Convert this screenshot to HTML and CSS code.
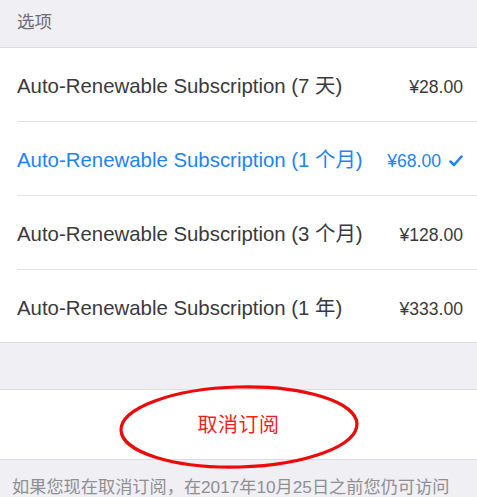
FILE: index.html
```html
<!DOCTYPE html>
<html lang="zh-CN">
<head>
    <meta charset="UTF-8">
    <meta name="viewport" content="width=device-width, initial-scale=1.0">
    <title>订阅</title>
    <link rel="stylesheet" href="styles.css">
</head>
<body>
    <div class="section-header">选项</div>

    <div class="option-list">
        <div class="option-row">
            <span class="option-name">Auto-Renewable Subscription (7 天)</span>
            <span class="option-price">¥28.00</span>
        </div>
        <div class="option-row selected">
            <span class="option-name">Auto-Renewable Subscription (1 个月)</span>
            <span class="option-price">¥68.00</span>
            <svg class="check" width="14" height="12" viewBox="0 0 14 12">
                <path d="M1.5 6.5 L5 10 L12.5 1.5" fill="none" stroke="currentColor" stroke-width="2.5" stroke-linecap="round" stroke-linejoin="round"/>
            </svg>
        </div>
        <div class="option-row">
            <span class="option-name">Auto-Renewable Subscription (3 个月)</span>
            <span class="option-price">¥128.00</span>
        </div>
        <div class="option-row">
            <span class="option-name">Auto-Renewable Subscription (1 年)</span>
            <span class="option-price">¥333.00</span>
        </div>
    </div>

    <div class="spacer"></div>

    <div class="cancel-block">
        <a class="cancel-button">取消订阅</a>
        <svg class="circle-mark" width="244" height="88" viewBox="0 0 244 88">
            <ellipse cx="121" cy="44" rx="118" ry="40" fill="none" stroke="#ee0a0a" stroke-width="3.2" transform="rotate(-1.5 121 44)"/>
        </svg>
    </div>

    <p class="footer-note">如果您现在取消订阅，在2017年10月25日之前您仍可访问</p>
</body>
</html>
```

FILE: styles.css
```css
body {
    margin: 0;
    padding: 0;
    background: #efeff4;
    font-family: "Liberation Sans", "Noto Sans CJK SC", Arial, sans-serif;
    color: #3a3a3c;
    overflow: hidden;
}
.section-header {
    height: 47px;
    padding: 12px 0 0 17px;
    font-size: 17.5px;
    line-height: 20px;
    color: #6d6d72;
    box-sizing: border-box;
}
.option-list {
    background: #ffffff;
    border-top: 1px solid #dcdce0;
    border-bottom: 1px solid #dcdce0;
}
.option-row {
    height: 74px;
    box-sizing: border-box;
    margin-left: 17px;
    padding: 27px 14px 0 0;
    display: flex;
    align-items: baseline;
    font-size: 20.4px;
    line-height: 22px;
    border-bottom: 1px solid #e4e4e7;
}
.option-row:last-child {
    border-bottom: none;
    height: 72px;
}
.option-name {
    flex: 1;
}
.option-price {
    font-size: 17.6px;
}
.option-row.selected {
    color: #1c84f7;
}
.check {
    margin-left: 8px;
    color: #1c84f7;
    align-self: center;
    margin-top: -22px;
}
.spacer {
    height: 46px;
}
.cancel-block {
    position: relative;
    height: 71px;
    box-sizing: border-box;
    background: #ffffff;
    border-top: 1px solid #dcdce0;
    border-bottom: 1px solid #dcdce0;
    padding-top: 24px;
    text-align: center;
}
.cancel-button {
    color: #f51c1c;
    font-size: 20px;
    line-height: 22px;
    letter-spacing: 0.5px;
    cursor: pointer;
}
.circle-mark {
    position: absolute;
    left: 118px;
    top: -7px;
}
.footer-note {
    margin: 13px 0 0 12px;
    font-size: 17.2px;
    color: #8e8e93;
    white-space: nowrap;
}
```
